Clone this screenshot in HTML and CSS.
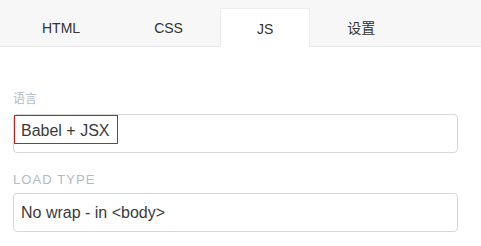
FILE: index.html
```html
<!DOCTYPE html>
<html lang="zh">
<head>
<meta charset="utf-8">
<title>JS 设置</title>
<link rel="stylesheet" href="styles.css">
</head>
<body>
<div class="tabs">
  <div class="tab">HTML</div>
  <div class="tab">CSS</div>
  <div class="tab active">JS</div>
  <div class="tab">设置</div>
</div>
<div class="content">
  <div class="field">
    <label class="label label-cjk">语言</label>
    <div class="select select-focus"><span class="focus-box">Babel + JSX</span></div>
  </div>
  <div class="field">
    <label class="label label-caps">LOAD TYPE</label>
    <div class="select">No wrap - in &lt;body&gt;</div>
  </div>
</div>
</body>
</html>
```
FILE: styles.css
```css
* { box-sizing: border-box; }
html, body { margin: 0; padding: 0; background: #fff; }
body {
  font-family: "Liberation Sans", Arial, "Noto Sans CJK SC", sans-serif;
  color: #333;
}
.tabs {
  display: flex;
  padding: 8px 0 0 5px;
  height: 47px;
  background: #f7f7f7;
  border-bottom: 1px solid #e6e6e6;
}
.tab {
  padding: 0 36px;
  height: 39px;
  line-height: 38px;
  font-size: 14px;
  color: #333;
  border: 1px solid transparent;
  border-bottom: none;
}
.tab.active {
  background: #fff;
  border-color: #ececec;
  line-height: 40px;
}
.content {
  padding: 44px 23px 0 13px;
}
.field { display: flex; flex-direction: column; }
.field + .field { margin-top: 19px; }
.label {
  font-size: 12px;
  line-height: 16px;
  color: #b3bbc2;
}
.label-cjk { margin-bottom: 7px; }
.label-caps {
  font-size: 13px;
  letter-spacing: 1.1px;
  margin-bottom: 5px;
}
.select {
  height: 39px;
  border: 1px solid #d6d6d6;
  border-radius: 4px;
  background: #fff;
  font-size: 16px;
  line-height: 37px;
  padding: 0 7px;
  color: #3a3a3a;
}
.select-focus {
  display: flex;
  align-items: flex-start;
  padding: 0;
}
.focus-box {
  display: block;
  border: 1px solid #c8202a;
  padding: 2px 7px 0 6px;
  line-height: 25px;
  height: 29px;
}
```
